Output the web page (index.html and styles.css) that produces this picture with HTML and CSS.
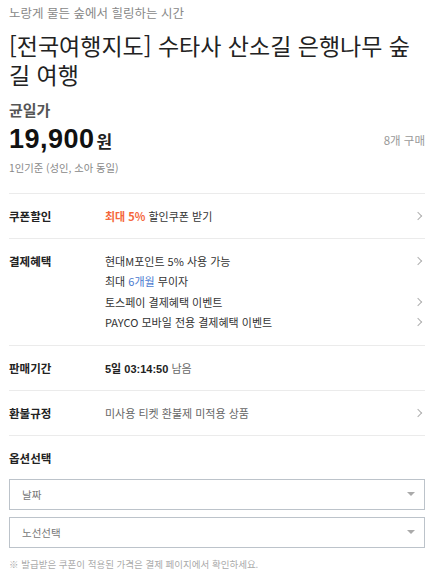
FILE: index.html
```html
<!DOCTYPE html>
<html lang="ko">
<head>
    <meta charset="UTF-8">
    <meta name="viewport" content="width=device-width, initial-scale=1.0">
    <title>수타사 산소길 은행나무 숲길 여행</title>
    <link rel="stylesheet" href="styles.css">
</head>
<body>
    <div class="page">
        <p class="subtitle">노랑게 물든 숲에서 힐링하는 시간</p>
        <h1 class="title">[전국여행지도] 수타사 산소길 은행나무 숲길 여행</h1>

        <div class="price-box">
            <div class="price-label">균일가</div>
            <div class="price-row">
                <div class="price">19,900<span class="won">원</span></div>
                <div class="sold">8개 구매</div>
            </div>
            <div class="price-note">1인기준 (성인, 소아 동일)</div>
        </div>

        <div class="info-row">
            <div class="info-label">쿠폰할인</div>
            <div class="info-body">
                <div class="line"><span><b class="orange">최대 5%</b> 할인쿠폰 받기</span><span class="chev"></span></div>
            </div>
        </div>

        <div class="info-row multi">
            <div class="info-label">결제혜택</div>
            <div class="info-body">
                <div class="line"><span>현대M포인트 5% 사용 가능</span><span class="chev"></span></div>
                <div class="line"><span>최대 <span class="blue">6개월</span> 무이자</span></div>
                <div class="line"><span>토스페이 결제혜택 이벤트</span><span class="chev"></span></div>
                <div class="line"><span>PAYCO 모바일 전용 결제혜택 이벤트</span><span class="chev"></span></div>
            </div>
        </div>

        <div class="info-row">
            <div class="info-label">판매기간</div>
            <div class="info-body">
                <div class="line"><span><b class="timer">5일 03:14:50</b> <span class="muted">남음</span></span></div>
            </div>
        </div>

        <div class="info-row">
            <div class="info-label">환불규정</div>
            <div class="info-body">
                <div class="line"><span class="muted">미사용 티켓 환불제 미적용 상품</span><span class="chev"></span></div>
            </div>
        </div>

        <div class="options">
            <div class="options-title">옵션선택</div>
            <div class="select"><span>날짜</span><span class="caret"></span></div>
            <div class="select"><span>노선선택</span><span class="caret"></span></div>
            <p class="footnote">※ 발급받은 쿠폰이 적용된 가격은 결제 페이지에서 확인하세요.</p>
        </div>
    </div>
</body>
</html>
```

FILE: styles.css
```css
body {
    margin: 0;
    font-family: "Noto Sans CJK KR", "Noto Sans", sans-serif;
    color: #222;
    background: #fff;
}
.page {
    padding: 0 7px 0 9px;
}
.subtitle {
    margin: 4px 0 0;
    font-size: 12.5px;
    line-height: 18px;
    color: #888;
}
.title {
    margin: 9px 0 0;
    font-size: 23px;
    line-height: 29px;
    font-weight: 400;
    color: #222;
    word-break: break-all;
}
.price-box {
    padding: 11px 0 18px;
    border-bottom: 1px solid #ebebeb;
}
.price-label {
    font-size: 15px;
    line-height: 20px;
    font-weight: 700;
    color: #555;
}
.price-row {
    display: flex;
    justify-content: space-between;
    align-items: center;
    height: 40px;
}
.price {
    font-family: "Liberation Sans", Arial, sans-serif;
    font-size: 27px;
    line-height: 40px;
    font-weight: 700;
    color: #111;
    letter-spacing: 0.5px;
}
.won {
    font-family: "Noto Sans CJK KR", sans-serif;
    font-size: 17px;
    margin-left: 2px;
    color: #222;
}
.sold {
    font-size: 11.5px;
    color: #999;
}
.price-note {
    font-size: 10.3px;
    line-height: 15px;
    color: #888;
}
.info-row {
    display: flex;
    padding: 12px 0 11px;
    border-bottom: 1px solid #ebebeb;
}
.info-row.multi {
    padding-bottom: 12px;
}
.info-label {
    width: 96px;
    flex: none;
    font-size: 11.5px;
    line-height: 20px;
    font-weight: 700;
    color: #222;
}
.info-body {
    flex: 1;
}
.line {
    display: flex;
    justify-content: space-between;
    align-items: center;
    font-size: 11px;
    line-height: 20.5px;
    color: #333;
}
.chev {
    width: 5px;
    height: 5px;
    border-top: 1px solid #b0b0b0;
    border-right: 1px solid #b0b0b0;
    transform: rotate(45deg);
    margin-right: 4px;
}
.orange {
    color: #f5673b;
}
.blue {
    color: #4b7bd0;
}
.timer {
    font-family: "Liberation Sans", "Noto Sans CJK KR", sans-serif;
    color: #222;
}
.muted {
    color: #666;
}
.options {
    padding-top: 12px;
}
.options-title {
    font-size: 11.5px;
    line-height: 20px;
    font-weight: 700;
    margin-bottom: 11px;
}
.select {
    box-sizing: border-box;
    display: flex;
    justify-content: space-between;
    align-items: center;
    height: 31px;
    padding: 0 9px 0 12px;
    border: 1px solid #bcc3ca;
    margin-bottom: 7px;
    font-size: 10.5px;
    color: #777;
}
.caret {
    width: 0;
    height: 0;
    border-left: 4px solid transparent;
    border-right: 4px solid transparent;
    border-top: 4px solid #aaa;
}
.footnote {
    margin: 9px 0 0;
    font-size: 9.5px;
    line-height: 14px;
    color: #aaa;
}
```
